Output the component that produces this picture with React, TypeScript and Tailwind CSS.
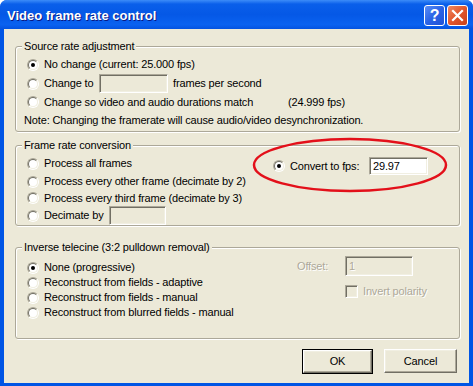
import type { ReactNode } from 'react';

const Radio = ({ checked = false }: { checked?: boolean }) => (
  <span className="block w-[12px] h-[12px] shrink-0 rounded-full border border-t-[#ACA899] border-l-[#ACA899] border-b-white border-r-white">
    <span className="flex w-full h-full items-center justify-center rounded-full border border-t-[#716F64] border-l-[#716F64] border-b-[#F1EFE2] border-r-[#F1EFE2] bg-white">
      {checked && <span className="block w-[4px] h-[4px] rounded-full bg-black" />}
    </span>
  </span>
);

const Field = ({ className, value, disabled }: { className: string; value?: string; disabled?: boolean }) => (
  <div
    className={`flex items-center shrink-0 pl-[3px] border border-t-[#ACA899] border-l-[#ACA899] border-b-white border-r-white shadow-[inset_1px_1px_0_#716F64,inset_-1px_-1px_0_#F1EFE2] ${
      disabled ? 'bg-[#ECE9D8] text-[#ACA899]' : 'bg-white text-black'
    } ${className}`}
  >
    {value}
  </div>
);

const Group = ({ title, className, children }: { title: string; className: string; children: ReactNode }) => (
  <fieldset
    className={`ml-[11px] mr-[9px] border border-[#ACA899] rounded-[3px] shadow-[inset_1px_1px_0_#fff,1px_1px_0_#fff] ${className}`}
  >
    <legend className="ml-[6px] px-[2px] leading-[13px] bg-[#ECE9D8]">{title}</legend>
    {children}
  </fieldset>
);

const RadioRow = ({ label, checked, className }: { label: ReactNode; checked?: boolean; className: string }) => (
  <div className={`flex items-center ${className}`}>
    <Radio checked={checked} />
    <span className="ml-[5px] flex items-center whitespace-nowrap">{label}</span>
  </div>
);

const Button = ({ label, isDefault, className }: { label: string; isDefault?: boolean; className: string }) => (
  <div className={`${isDefault ? 'border border-black' : ''} ${className}`}>
    <div className="flex w-full h-full items-center justify-center border border-t-white border-l-white border-b-[#716F64] border-r-[#716F64] shadow-[inset_-1px_-1px_0_#ACA899,inset_1px_1px_0_#F1EFE2]">
      {label}
    </div>
  </div>
);

export default function App() {
  return (
    <div className="relative w-[473px] h-[386px] font-['Liberation_Sans',Arial,sans-serif] text-[11px] tracking-[-0.15px] text-black bg-white">
      <div className="flex flex-col w-full h-full rounded-t-[7px] overflow-hidden bg-[#0055E5]">
        {/* Title bar */}
        <div className="flex items-center h-[29px] pt-[2px] pl-[7px] pr-[5px] bg-[linear-gradient(180deg,#3C8CF8_0%,#0A5FEA_14%,#0558E6_50%,#0A62F0_85%,#0453E0_100%)]">
          <span className="flex-1 text-[13px] font-bold tracking-normal text-white [text-shadow:1px_1px_0_#0A1883]">
            Video frame rate control
          </span>
          <div className="flex gap-[2px]">
            <div className="flex w-[21px] h-[21px] items-center justify-center rounded-[3px] border border-white bg-[linear-gradient(135deg,#5A8DF5_0%,#2A63E6_50%,#1F52D6_100%)] text-white text-[16px] font-bold leading-none">
              ?
            </div>
            <div className="flex w-[21px] h-[21px] items-center justify-center rounded-[3px] border border-white bg-[linear-gradient(135deg,#EE8A63_0%,#E2562C_50%,#C8401A_100%)]">
              <svg width="13" height="13" viewBox="0 0 13 13">
                <path d="M2 2 L11 11 M11 2 L2 11" stroke="white" strokeWidth="2.2" strokeLinecap="square" />
              </svg>
            </div>
          </div>
        </div>

        {/* Client area */}
        <div className="flex-1 mx-[4px] mb-[3px] bg-[#ECE9D8] flex flex-col">
          <Group title="Source rate adjustment" className="mt-[11px] pt-[2px] pb-[1px]">
            <div className="pl-[8px]">
              <div className="pl-[3px]">
                <RadioRow checked label="No change (current: 25.000 fps)" className="h-[19px]" />
                <RadioRow
                  className="h-[19px]"
                  label={
                    <>
                      <span className="w-[55px]">Change to</span>
                      <Field disabled className="w-[69px] h-[19px]" />
                      <span className="ml-[5px]">frames per second</span>
                    </>
                  }
                />
                <RadioRow
                  className="h-[18px]"
                  label={
                    <>
                      <span className="w-[244px]">Change so video and audio durations match</span>
                      <span>(24.999 fps)</span>
                    </>
                  }
                />
              </div>
              <div className="flex items-center h-[19px]">
                Note: Changing the framerate will cause audio/video desynchronization.
              </div>
            </div>
          </Group>

          <Group title="Frame rate conversion" className="mt-[7px] pt-[2px]">
            <div className="flex pl-[11px]">
              <div className="w-[246px]">
                <RadioRow label="Process all frames" className="h-[19px]" />
                <RadioRow label="Process every other frame (decimate by 2)" className="h-[17px]" />
                <RadioRow label="Process every third frame (decimate by 3)" className="h-[16px]" />
                <RadioRow
                  className="h-[19px]"
                  label={
                    <>
                      <span className="w-[65px]">Decimate by</span>
                      <Field disabled className="w-[57px] h-[19px]" />
                    </>
                  }
                />
              </div>
              <div className="mt-[3px]">
                <RadioRow
                  checked
                  className="h-[18px]"
                  label={
                    <>
                      <span className="w-[79px]">Convert to fps:</span>
                      <Field value="29.97" className="w-[59px] h-[18px]" />
                    </>
                  }
                />
              </div>
            </div>
          </Group>

          <Group title="Inverse telecine (3:2 pulldown removal)" className="mt-[15px] pb-[18px]">
            <div className="flex items-start pl-[11px]">
              <div className="w-[270px] pt-[6px]">
                <RadioRow checked label="None (progressive)" className="h-[15px]" />
                <RadioRow label="Reconstruct from fields - adaptive" className="h-[15px]" />
                <RadioRow label="Reconstruct from fields - manual" className="h-[15px]" />
                <RadioRow label="Reconstruct from blurred fields - manual" className="h-[15px]" />
              </div>
              <div className="mt-[2px] text-[#ACA899] [text-shadow:1px_1px_0_#fff]">
                <div className="flex items-center h-[20px]">
                  <span className="w-[48px]">Offset:</span>
                  <Field disabled value="1" className="w-[68px] h-[20px]" />
                </div>
                <div className="flex items-center mt-[7px] pl-[48px]">
                  <span className="block w-[13px] h-[13px] border border-t-[#ACA899] border-l-[#ACA899] border-b-white border-r-white shadow-[inset_1px_1px_0_#716F64,inset_-1px_-1px_0_#F1EFE2] bg-[#ECE9D8]" />
                  <span className="ml-[5px]">Invert polarity</span>
                </div>
              </div>
            </div>
          </Group>

          <div className="flex justify-end gap-[11px] mt-[10px] pr-[12px]">
            <Button isDefault label="OK" className="w-[71px] h-[25px]" />
            <Button label="Cancel" className="w-[73px] h-[24px]" />
          </div>
        </div>
      </div>

      {/* red annotation */}
      <svg className="absolute inset-0 pointer-events-none" width="473" height="386">
        <ellipse cx="350" cy="165" rx="96" ry="26" fill="none" stroke="#E3101A" strokeWidth="2.5" />
      </svg>
    </div>
  );
}
